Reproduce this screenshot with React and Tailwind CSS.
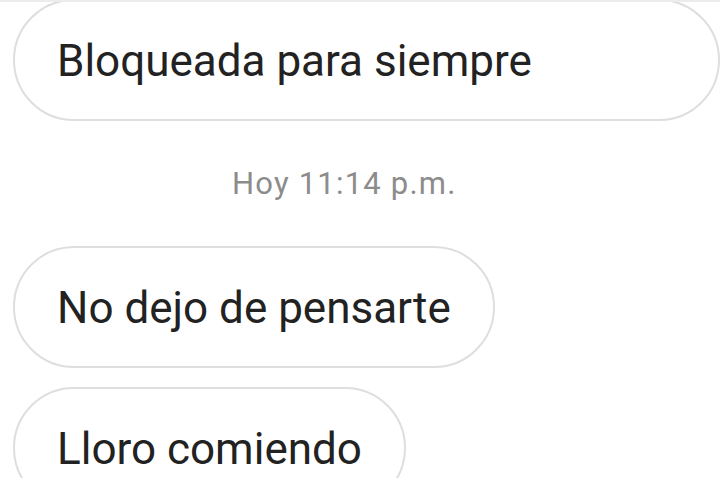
const messages = ['No dejo de pensarte', 'Lloro comiendo'];

function Bubble({ children }) {
  return (
    <div className="self-start rounded-full border-2 border-[#dedede] bg-white px-[42px] h-[122px] flex items-center shrink-0">
      <span className="text-[44px] leading-none text-[#222222] pt-[2px]">{children}</span>
    </div>
  );
}

export default function App() {
  return (
    <div
      className="w-[720px] h-[478px] overflow-hidden bg-white flex flex-col pl-[13px] border-t-2 border-[#ececec]"
      style={{ fontFamily: 'Roboto, "Liberation Sans", sans-serif' }}
    >
      <div className="-mt-[3px]">
        <Bubble>Bloqueada para siempre</Bubble>
      </div>
      <div className="h-[125px] flex items-center pl-[219px] shrink-0">
        <span className="text-[31px] text-[#8c8c8c] leading-none tracking-[1.2px]">Hoy 11:14 p.m.</span>
      </div>
      <div className="flex flex-col gap-[19px]">
        {messages.map((m) => (
          <Bubble key={m}>{m}</Bubble>
        ))}
      </div>
    </div>
  );
}
